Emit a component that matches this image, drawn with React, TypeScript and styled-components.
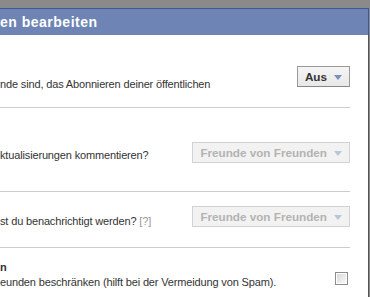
import React from "react";
import styled, { createGlobalStyle } from "styled-components";

const Global = createGlobalStyle`
  html, body { margin: 0; padding: 0; background: #8a8a8a; overflow: hidden; }
  body { font-family: Tahoma, "Liberation Sans", Arial, sans-serif; }
`;

const Frame = styled.div`
  width: 370px;
  height: 297px;
  padding-top: 8px;
  padding-right: 1px;
  box-sizing: border-box;
  background: #8a8a8a;
  display: flex;
  flex-direction: column;
`;

const Dialog = styled.div`
  flex: 1;
  background: #fff;
  border-right: 1px solid #555;
  display: flex;
  flex-direction: column;
`;

const Header = styled.div`
  height: 26px;
  margin-right: -1px;
  background: #6d84b4;
  border-top: 1px solid #3b5998;
  border-right: 1px solid #3b5998;
  color: #fff;
  font-size: 14px;
  font-weight: bold;
  letter-spacing: 0.5px;
  line-height: 26px;
  white-space: nowrap;
`;

const Body = styled.div`
  padding-right: 18px;
  display: flex;
  flex-direction: column;
`;

const Row = styled.div<{ $height: number; $last?: boolean }>`
  height: ${(p) => p.$height}px;
  box-sizing: border-box;
  display: flex;
  justify-content: space-between;
  align-items: flex-start;
  border-bottom: ${(p) => (p.$last ? "none" : "1px solid #cccccc")};
`;

const Label = styled.div<{ $top: number }>`
  margin-top: ${(p) => p.$top}px;
  color: #333;
  font-size: 11px;
  letter-spacing: -0.15px;
  line-height: 15px;
  white-space: nowrap;
`;

const Title = styled.div`
  font-weight: bold;
  color: #333;
`;

const Help = styled.span`
  color: #999;
`;

const Control = styled.div<{ $top: number; $right?: number }>`
  margin-top: ${(p) => p.$top}px;
  margin-right: ${(p) => p.$right ?? 0}px;
`;

const Select = styled.div<{ $disabled?: boolean }>`
  height: 21px;
  box-sizing: border-box;
  padding: 0 7px;
  display: flex;
  align-items: center;
  gap: 7px;
  font-size: 11.7px;
  font-weight: bold;
  white-space: nowrap;
  color: ${(p) => (p.$disabled ? "#b3b3b3" : "#333")};
  background: ${(p) =>
    p.$disabled ? "#f2f2f2" : "linear-gradient(#f5f5f5, #e8e8e8)"};
  border: 1px solid ${(p) => (p.$disabled ? "#d2d2d2" : "#999")};
  border-bottom-color: ${(p) => (p.$disabled ? "#d2d2d2" : "#888")};
`;

const Arrow = styled.span<{ $disabled?: boolean }>`
  width: 0;
  height: 0;
  margin-top: 1px;
  border-left: 4px solid transparent;
  border-right: 4px solid transparent;
  border-top: 5px solid ${(p) => (p.$disabled ? "#b9c4da" : "#7b8fbb")};
`;

const Checkbox = styled.span`
  display: block;
  width: 13px;
  height: 13px;
  box-sizing: border-box;
  border: 1px solid #8c8c8c;
  box-shadow: inset 0 0 0 1px #fff;
  background: linear-gradient(135deg, #d6d7dc, #fbfbfb);
`;

export default function App() {
  return (
    <>
      <Global />
      <Frame>
        <Dialog>
          <Header>en bearbeiten</Header>
          <Body>
            <Row $height={73}>
              <Label $top={42}>nde sind, das Abonnieren deiner öffentlichen</Label>
              <Control $top={31}>
                <Select>
                  Aus
                  <Arrow />
                </Select>
              </Control>
            </Row>
            <Row $height={84}>
              <Label $top={40}>ktualisierungen kommentieren?</Label>
              <Control $top={34}>
                <Select $disabled>
                  Freunde von Freunden
                  <Arrow $disabled />
                </Select>
              </Control>
            </Row>
            <Row $height={56}>
              <Label $top={22}>
                st du benachrichtigt werden? <Help>[?]</Help>
              </Label>
              <Control $top={14}>
                <Select $disabled>
                  Freunde von Freunden
                  <Arrow $disabled />
                </Select>
              </Control>
            </Row>
            <Row $height={50} $last>
              <Label $top={12}>
                <Title>n</Title>
                eunden beschränken (hilft bei der Vermeidung von Spam).
              </Label>
              <Control $top={24} $right={2}>
                <Checkbox />
              </Control>
            </Row>
          </Body>
        </Dialog>
      </Frame>
    </>
  );
}
